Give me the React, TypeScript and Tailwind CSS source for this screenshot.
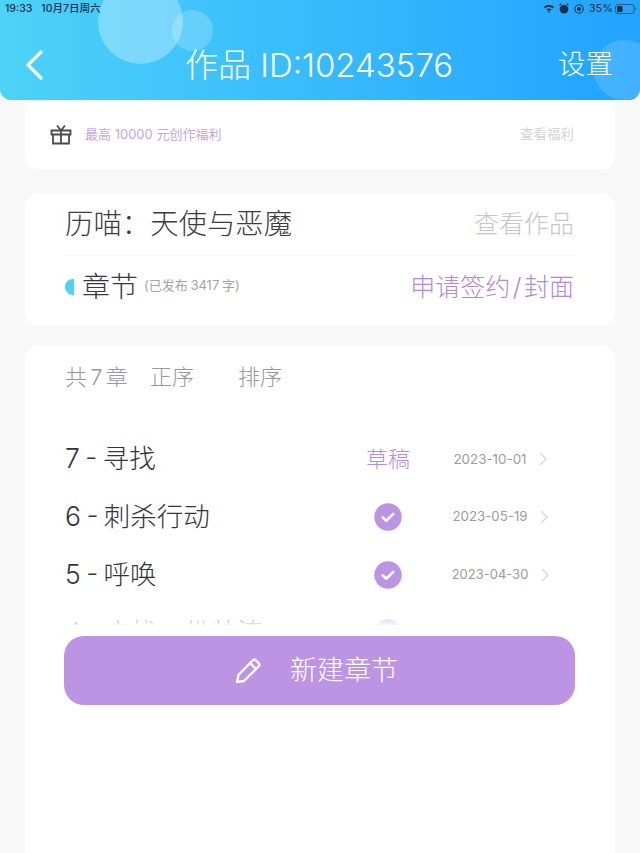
import React from "react";

const font = { fontFamily: '"Inter","Noto Sans CJK SC",sans-serif' };

function Check() {
  return (
    <svg width="28" height="28" viewBox="0 0 28 28" className="block">
      <circle cx="14" cy="14" r="13.7" fill="#bd94e4" />
      <path d="M8.6 14.3l3.7 3.4 7-6.8" fill="none" stroke="#fff" strokeWidth="2.6" strokeLinecap="round" strokeLinejoin="round" />
    </svg>
  );
}

function Chevron() {
  return (
    <svg width="9" height="14" viewBox="0 0 9 14" className="block">
      <path d="M1.5 1.5L7 7l-5.500 5.500" fill="none" stroke="#d4d4d4" strokeWidth="1.2" strokeLinecap="round" strokeLinejoin="round" />
    </svg>
  );
}

function Row({ title, status, date, dateClass, chevClass }: { title: string; status: React.ReactNode; date: string; dateClass: string; chevClass: string }) {
  return (
    <div className="flex h-[58px] items-center pl-[40px]">
      <div className="mb-[2px] w-[300px] text-[26.500px] leading-none font-light text-[#34343a] [word-spacing:-2px] whitespace-nowrap">{title}</div>
      <div className="flex w-[46px] justify-center">{status}</div>
      <div className={"w-[130px] whitespace-nowrap pl-[28px] text-center text-[#9c9c9c] " + dateClass}>{date}</div>
      <div className={chevClass}><Chevron /></div>
    </div>
  );
}

export default function App() {
  return (
    <div style={font} className="flex h-[853px] w-[640px] flex-col overflow-hidden bg-[#f8f8f8]">
      <header className="relative z-10 h-[100px] shrink-0 overflow-hidden rounded-b-[11px] bg-gradient-to-r from-[#4dd2f8] to-[#21a3ff]">
        <div className="absolute left-[98px] top-[-21px] h-[85px] w-[85px] rounded-full bg-white/30" />
        <div className="absolute left-[172px] top-[10px] h-[41px] w-[41px] rounded-full bg-white/20" />
        <div className="absolute left-[594px] top-[40px] h-[60px] w-[60px] rounded-full bg-white/15" />
        <div className="relative flex h-[17px] items-center justify-between pl-[5px] pr-[4px] text-[10.5px] font-medium text-[#12324a]">
          <div className="flex gap-[9px] whitespace-nowrap">
            <span>19:33</span>
            <span className="[word-spacing:-1px]">10月7日周六</span>
          </div>
          <div className="flex items-center">
            <svg width="12" height="9" viewBox="0 0 10 8"><path d="M0.500 2.600C3 .300 7 .300 9.500 2.600L8.300 3.900C6.400 2.200 3.600 2.200 1.700 3.900zM2.700 4.800C3.900 3.700 6.100 3.700 7.300 4.800L6.200 6C5.500 5.400 4.500 5.400 3.800 6zM5 7.900L4 6.800C4.500 6.400 5.500 6.400 6 6.800z" fill="#12324a" /></svg>
            <svg width="10" height="11" viewBox="0 0 9 10" className="ml-[4px]"><circle cx="4.500" cy="5.500" r="4" fill="#12324a" /><path d="M0.500 2L2 .6M8.500 2L7 .6" stroke="#12324a" strokeWidth="1.200" /></svg>
            <svg width="10" height="10" viewBox="0 0 10 10" className="ml-[5px]"><circle cx="5" cy="5" r="4.200" fill="none" stroke="#12324a" strokeWidth="1.100" /><circle cx="5" cy="5" r="2" fill="#12324a" /></svg>
            <span className="ml-[5px] text-[11px] font-normal">35%</span>
            <svg width="21" height="10" viewBox="0 0 21 10" className="ml-[2px]"><rect x="0.500" y="0.500" width="18.500" height="9" rx="2.500" fill="none" stroke="#12324a" strokeOpacity="0.6" /><rect x="2" y="2" width="5.500" height="6" rx="1" fill="#12324a" /><path d="M20 3.500c.7.300.7 2.700 0 3z" fill="#12324a" /></svg>
          </div>
        </div>
        <div className="relative mt-[14px] flex h-[68px] items-center text-white">
          <svg width="18" height="32" viewBox="0 0 18 32" className="ml-[25px]">
            <path d="M16 3L3 16l13 13" fill="none" stroke="#fff" strokeWidth="3.200" strokeLinecap="round" strokeLinejoin="round" />
          </svg>
          <div className="ml-[142px] whitespace-nowrap text-[33px] leading-none font-light">作品 ID:10243576</div>
          <div className="ml-auto mr-[27px] whitespace-nowrap text-[27.500px] leading-none font-light">设置</div>
        </div>
      </header>

      <main className="flex flex-1 flex-col px-[25px]">
        <section className="flex h-[69px] shrink-0 items-center rounded-b-[12px] bg-white pl-[25px] pr-[41px]">
          <svg width="22" height="21" viewBox="0 0 22 21" fill="none" stroke="#4a4a52" strokeWidth="1.800">
            <path d="M1.500 6.500h19v4h-19zM3 10.500v9h16v-9M11 6.500v13M7 1.500l4 5 4-5" />
          </svg>
          <span className="ml-[13px] whitespace-nowrap text-[13px] text-[#c5a6e2]">最高 10000 元创作福利</span>
          <span className="ml-auto whitespace-nowrap text-[13.500px] text-[#d4d4d4]">查看福利</span>
        </section>

        <section className="mt-[25px] h-[131px] shrink-0 rounded-[12px] bg-white">
          <div className="ml-[40px] mr-[41px] flex h-[62px] items-center justify-between border-b border-[#f6f6f6]">
            <span className="whitespace-nowrap text-[28.400px] leading-none font-light text-[#3c3c42]">历喵：天使与恶魔</span>
            <span className="whitespace-nowrap text-[25px] leading-none font-light text-[#c8c8c8]">查看作品</span>
          </div>
          <div className="mr-[41px] flex h-[61px] items-center pl-[40px]">
            <span className="h-[16px] w-[9px] rounded-l-full bg-[#4fd0f5]" />
            <span className="ml-[8px] whitespace-nowrap text-[28px] leading-none font-light text-[#38383e]">章节</span>
            <span className="ml-[6px] mt-[-2px] whitespace-nowrap text-[13px] text-[#a4a4a8] [word-spacing:-1px]">(已发布 3417 字)</span>
            <span className="ml-auto mt-[2px] whitespace-nowrap text-[25px] leading-none font-light text-[#b488e0] [word-spacing:-4.500px]">申请签约 / 封面</span>
          </div>
        </section>

        <section className="relative mt-[21px] flex-1 rounded-t-[12px] bg-white">
          <div className="flex h-[62px] items-center pl-[40px] text-[22px] leading-none font-light text-[#999] whitespace-nowrap">
            <span className="w-[85px] [word-spacing:-3px]">共 7 章</span>
            <span className="w-[88px]">正序</span>
            <span>排序</span>
          </div>
          <div className="relative mt-[22px] h-[195px] overflow-hidden">
            <Row title="7 - 寻找" status={<span className="whitespace-nowrap text-[22px] leading-none font-light text-[#b58ce0]">草稿</span>} date="2023-10-01" dateClass="text-[13.400px]" chevClass="ml-[-2px]" />
            <Row title="6 - 刺杀行动" status={<Check />} date="2023-05-19" dateClass="text-[13.300px]" chevClass="ml-[-1px]" />
            <Row title="5 - 呼唤" status={<Check />} date="2023-04-30" dateClass="text-[13px]" chevClass="ml-[0px]" />
            <Row title="4 - 方找一份帅涛" status={<Check />} date="" dateClass="text-[13px]" chevClass="hidden" />
            <div className="absolute bottom-0 left-0 right-0 h-[10px] bg-gradient-to-b from-white/50 to-white/90" />
          </div>
          <button className="absolute left-[39px] top-[290px] flex h-[69px] w-[511px] items-center justify-center rounded-[20px] bg-[#bd94e4] text-white">
            <svg width="28" height="28" viewBox="0 0 28 28" fill="none" stroke="#fff" strokeWidth="2.400" strokeLinejoin="round" className="ml-[-7px]">
              <path d="M3 25l1.500-7L18.500 3.500a2.500 2.500 0 0 1 3.500 0l2.500 2.500a2.500 2.500 0 0 1 0 3.500L10 24z" />
              <path d="M16 6l6 6" />
            </svg>
            <span className="ml-[28px] whitespace-nowrap text-[27px] leading-none font-light">新建章节</span>
          </button>
        </section>
      </main>
    </div>
  );
}
